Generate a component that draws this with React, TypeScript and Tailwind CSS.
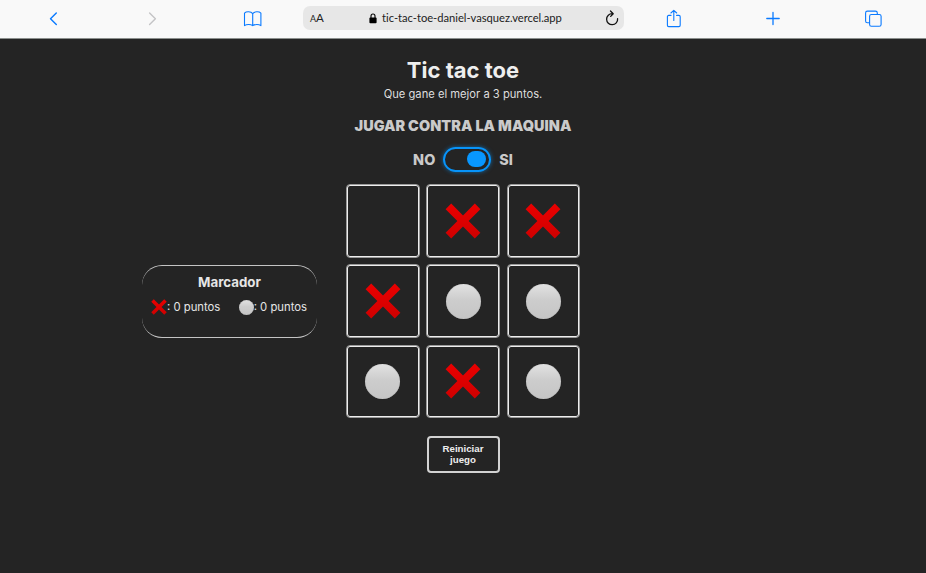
import React from "react";

type Mark = "x" | "o" | null;

const board: Mark[] = [null, "x", "x", "x", "o", "o", "o", "x", "o"];

function Cross({ className }: { className: string }) {
  return (
    <svg viewBox="0 0 36 36" className={className} aria-label="X">
      <defs>
        <linearGradient id="cross" x1="0" y1="0" x2="0" y2="1">
          <stop offset="0" stopColor="#ea0000" />
          <stop offset="1" stopColor="#cf0000" />
        </linearGradient>
      </defs>
      <path
        fill="url(#cross)"
        d="M6.2.6 18 12.4 29.8.6l5.6 5.6L23.6 18l11.8 11.8-5.6 5.6L18 23.6 6.2 35.4.6 29.8 12.4 18 .6 6.2z"
      />
    </svg>
  );
}

function Circle({ className }: { className: string }) {
  return (
    <span
      className={`block rounded-full bg-linear-to-b from-[#e2e2e2] via-[#cdcdcd] via-45% to-[#c5c5c5] shadow-[inset_0_0_1px_#a9a9a9] ${className}`}
    />
  );
}

function Toolbar() {
  return (
    <header className="flex h-[39px] border-b border-[#8b8f8d] bg-[#f9f9f9] text-[#0a7aff]">
      <svg width="303" height="38" fill="none" stroke="currentColor" strokeLinecap="round" strokeLinejoin="round" className="shrink-0">
        <path d="M56.3 13 50.5 18.8l5.8 5.8" strokeWidth="1.4" />
        <path d="M149.6 13l5.8 5.8-5.8 5.8" stroke="#c4c4c6" strokeWidth="1.4" />
        <path
          d="M252.7 13.6c-1.8-2.3-6.4-2.3-8.2-.5v12.5c2-1.4 6.2-1.4 8.2 0 2-1.4 6.2-1.4 8.2 0V13.1c-1.8-1.8-6.4-1.8-8.2.5v12"
          strokeWidth="1.1"
        />
      </svg>
      <div className="mt-[6px] flex h-6 w-[321px] shrink-0 items-center rounded-[7px] bg-[#e7e7e7] font-[Lato,sans-serif] text-[#222]">
        <span className="ml-[7px] flex w-[59px] items-baseline leading-none">
          <span className="text-[9px] leading-none">A</span>
          <span className="text-[11.5px] leading-none">A</span>
        </span>
        <svg width="8" height="11" viewBox="0 0 8 11" className="mr-[5px]">
          <path d="M2 5V3a2 2 0 0 1 4 0v2" fill="none" stroke="#000" strokeWidth="1.1" />
          <rect x=".4" y="4.5" width="7.2" height="5.8" rx="1" />
        </svg>
        <span className="w-[220px] text-[11.2px] leading-none tracking-[-0.02px] whitespace-nowrap">
          tic-tac-toe-daniel-vasquez.vercel.app
        </span>
        <svg width="16" height="18" viewBox="0 0 16 18" fill="none" stroke="#111" strokeWidth="1.3" strokeLinecap="round" strokeLinejoin="round" className="ml-[2px]">
          <path d="M13.6 9.7A5.5 5.5 0 1 1 8.4 4.7M6.5 2l2.7 2.7-2.5 2.7" />
        </svg>
      </div>
      <svg width="302" height="38" fill="none" stroke="currentColor" strokeWidth="1.1" strokeLinecap="round" strokeLinejoin="round">
        <path d="M47 15.4h-2.3a1.3 1.3 0 0 0-1.3 1.3v8.6a1.3 1.3 0 0 0 1.3 1.3h10.2a1.3 1.3 0 0 0 1.3-1.3v-8.6a1.3 1.3 0 0 0-1.3-1.3h-2.3M49.8 20.5v-10M46.9 13l2.9-2.7 2.9 2.7" />
        <path d="M149 12.5v12M142.8 18.5h12.4" strokeWidth="1.3" />
        <rect x="245.6" y="14.5" width="11.5" height="11.7" rx="1.8" />
        <path d="M245.5 22.8H243.4a1.8 1.8 0 0 1-1.8-1.8v-8.1a1.8 1.8 0 0 1 1.8-1.8h8.1a1.8 1.8 0 0 1 1.8 1.8v1.5" />
      </svg>
    </header>
  );
}

function Score() {
  return (
    <aside className="mt-[81px] mr-[29px] h-[73px] w-[175px] justify-self-end rounded-[20px] border-y border-[#c4c4c4] pt-[6px] text-[#e6e6e6]">
      <h2 className="text-center text-[13.3px] leading-[20px] font-bold">Marcador</h2>
      <div className="mt-[7px] flex h-4 items-center justify-between pr-[10px] pl-[9px] text-[11.3px] leading-4">
        <span className="flex items-center">
          <Cross className="size-[16px]" />: 0 puntos
        </span>
        <span className="flex items-center">
          <Circle className="size-[15px]" />: 0 puntos
        </span>
      </div>
    </aside>
  );
}

export default function App() {
  return (
    <div className="h-[573px] overflow-hidden bg-[#242424] font-[Inter,sans-serif]">
      <Toolbar />
      <main className="flex flex-col items-center text-[#cacaca]">
        <h1 className="mt-[17px] text-[22px] leading-7 font-bold text-[#eee]">Tic tac toe</h1>
        <p className="mt-px text-[11.2px] leading-[18px] text-[#dedede]">Que gane el mejor a 3 puntos.</p>
        <h2 className="mt-[13px] text-[14.4px] leading-5 font-black tracking-[0.07px]">JUGAR CONTRA LA MAQUINA</h2>
        <div className="mt-[10px] flex h-[26px] items-center gap-[8px] text-[14.4px] font-extrabold">
          <span className="pt-[2px]">NO</span>
          <div className="flex h-[25px] w-[48px] items-center justify-end rounded-full border-2 border-[#0794fa] pr-[3px] shadow-[0_0_4px_#0794fa99]">
            <span className="h-4 w-[19px] rounded-full bg-[#0897ff]" />
          </div>
          <span className="pt-[2px]">SI</span>
        </div>
        <div className="mt-[12px] grid w-full grid-cols-[346px_234px_1fr]">
          <Score />
          <div className="grid grid-cols-[73.5px_73.5px_73.5px] gap-[6.75px]">
            {board.map((mark, i) => (
              <div
                key={i}
                className="flex h-[73.5px] items-center justify-center rounded-[4px] border border-[#999] shadow-[inset_0_0_0_1px_#eee]"
              >
                {mark === "x" && <Cross className="size-[36px]" />}
                {mark === "o" && <Circle className="size-[35px]" />}
              </div>
            ))}
          </div>
        </div>
        <button className="mt-[18px] h-[37px] w-[73px] rounded-[4px] border-2 border-[#d2d2d2] px-2 pb-px font-['Liberation_Sans',sans-serif] text-[9.7px] leading-[11px] font-bold text-[#eee]">
          Reiniciar juego
        </button>
      </main>
    </div>
  );
}
